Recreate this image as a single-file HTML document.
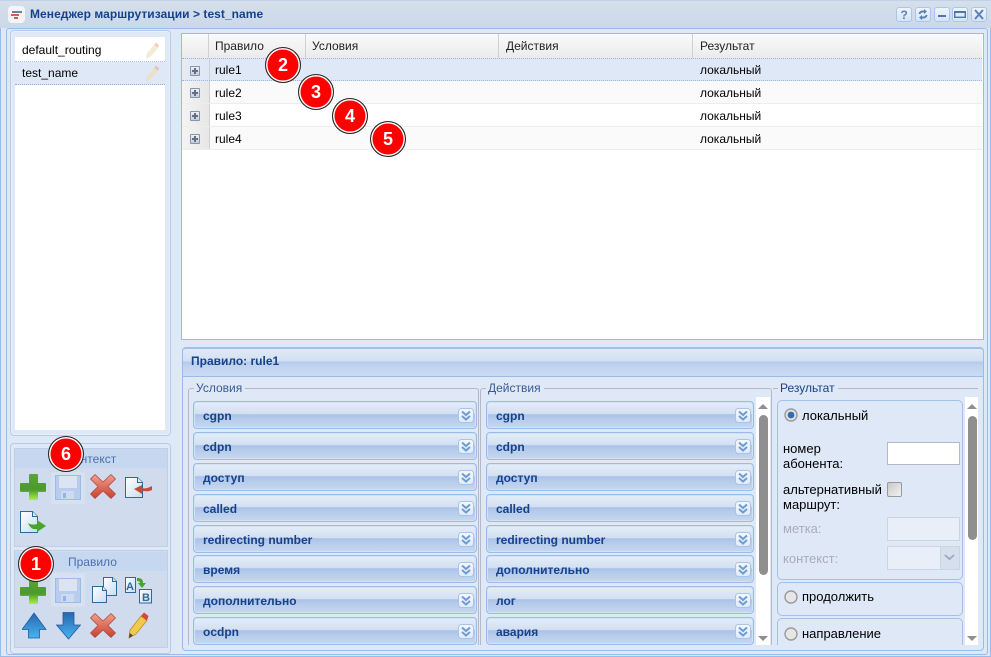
<!DOCTYPE html>
<html><head><meta charset="utf-8">
<style>
html,body{margin:0;padding:0}
body{width:991px;height:657px;overflow:hidden;position:relative;background:#dfe8f6;font-family:"Liberation Sans",sans-serif;font-size:12px;color:#000}
.a{position:absolute;box-sizing:border-box}
.t{position:absolute;white-space:nowrap;line-height:14px}
.b{font-weight:bold;color:#15428b}
.it{position:absolute;box-sizing:border-box;height:28px;border:1px solid #99bbe8;border-radius:4px;box-shadow:inset 0 0 0 1px #d5e2f3;background:linear-gradient(#e5eef9 0,#d3e0f2 45%,#a9c2e7 49%,#b4c9ea 60%,#c6d7ef 100%)}
.it span{position:absolute;left:9px;top:7px;font-weight:bold;color:#15428b;line-height:14px;white-space:nowrap}
.it svg{position:absolute;right:2px;top:6px}
.c{position:absolute;width:36px;height:36px;border-radius:50%;box-sizing:border-box;background:#f00;border:1px solid #222;box-shadow:inset 0 0 0 1.5px #fff;color:#fff;font:bold 18px/34px "Liberation Sans",sans-serif;text-align:center}
.row{position:absolute;left:182px;width:800px;height:23px;border-bottom:1px solid #ededed;box-sizing:border-box}
.ex{position:absolute;left:0;top:0;width:27px;height:22px;background:linear-gradient(90deg,#f4f4f4,#e7e7e7);border-right:1px solid #d0d0d0}
.ex i{position:absolute;left:8px;top:7px;width:10px;height:10px;box-sizing:border-box;border:1px solid #8793a8;border-radius:1px;background:linear-gradient(#eef1f5,#c6cedb)}
.ex i:before{content:"";position:absolute;left:1px;top:3px;width:6px;height:2px;background:#5f6f88}
.ex i:after{content:"";position:absolute;left:3px;top:1px;width:2px;height:6px;background:#5f6f88}
.hc{position:absolute;top:34px;height:24px;background:linear-gradient(#fafafa,#ebebeb);border-right:1px solid #d0d0d0;box-sizing:border-box}
.tb{position:absolute;top:7px;width:16px;height:15px;box-sizing:border-box;border:1px solid #a9c5ec;border-radius:3px;background:linear-gradient(#eef4fc,#d6e3f6)}
.tb svg{position:absolute;left:0;top:0}
</style></head><body>

<svg width="0" height="0" style="position:absolute">
<defs>
<linearGradient id="gr" x1="0" y1="0" x2="0" y2="1"><stop offset="0" stop-color="#5aa53a"/><stop offset=".6" stop-color="#4c9a2a"/><stop offset="1" stop-color="#a8ec5c"/></linearGradient>
<linearGradient id="rd" x1="0" y1="0" x2="0" y2="1"><stop offset="0" stop-color="#f0a090"/><stop offset="1" stop-color="#c8402f"/></linearGradient>
<linearGradient id="bl" x1="0" y1="0" x2="0" y2="1"><stop offset="0" stop-color="#2a66b0"/><stop offset="1" stop-color="#46b4f0"/></linearGradient>
<linearGradient id="pg" x1="0" y1="0" x2="1" y2="1"><stop offset="0" stop-color="#ffffff"/><stop offset="1" stop-color="#c7dcf3"/></linearGradient>
<linearGradient id="btn" x1="0" y1="0" x2="0" y2="1"><stop offset="0" stop-color="#f4f8fe"/><stop offset="1" stop-color="#dfeafa"/></linearGradient>
<g id="plus"><path d="M9 1a1 1 0 0 1 1-1h7a1 1 0 0 1 1 1v8h7a1 1 0 0 1 1 1v7a1 1 0 0 1-1 1h-7v7a1 1 0 0 1-1 1h-7a1 1 0 0 1-1-1v-7H1a1 1 0 0 1-1-1v-7a1 1 0 0 1 1-1h8z" fill="url(#gr)"/></g>
<g id="x"><path d="M5 .5L13 8l8-7.500 4.500 4.500-7.500 7.500 7.500 7.500-4.500 4.500-8-7.500-8 7.500L.5 20l7.500-7.500L.5 5z" fill="url(#rd)" stroke="#b04a3c" stroke-width=".8" stroke-linejoin="round"/></g>
<g id="save"><rect x=".5" y=".5" width="25" height="24" fill="#b8ccee" stroke="#9dbbe8"/><rect x="4" y="1" width="18" height="12" fill="#dce3f3"/><rect x="6" y="16" width="13" height="8" fill="#cfdaf0"/><rect x="8" y="18" width="3" height="5" fill="#94b4e4"/></g>
<g id="dbl"><path d="M4 3.500l4 3.500 4-3.500M4 8l4 3.500 4-3.500" fill="none" stroke="#6f9bd3" stroke-width="2"/></g>
<g id="bt"><rect x=".5" y=".5" width="15" height="14" rx="3" fill="url(#btn)" stroke="#a8c4ea"/><use href="#dbl"/></g>
</defs>
</svg>

<!-- title bar -->
<div class="a" style="left:0;top:0;width:991px;height:657px;border:1px solid #99bbe8;border-top:0;background:#dfe8f6"></div>
<div class="a" style="left:0;top:0;width:991px;height:28px;background:linear-gradient(#d5dfec,#cbd8e8);border-top:1px solid #c2d2e6"></div>
<div class="a" style="left:8px;top:6px;width:17px;height:17px;border-radius:4px;background:#f5f5f5"></div>
<svg class="a" style="left:11px;top:9px" width="12" height="12"><rect x="1" y="2" width="10" height="2" fill="#6a83ad"/><rect x="0" y="5" width="8" height="2" fill="#e25a4e"/><rect x="3" y="8" width="4" height="2" fill="#e25a4e"/></svg>
<div class="t" style="left:30px;top:7px;font-weight:bold;color:#15428b;font-size:12px;letter-spacing:.05px">Менеджер маршрутизации &gt; test_name</div>
<div class="tb" style="left:896px"><svg width="14" height="13"><text x="3.500" y="11" font-family="Liberation Sans" font-weight="bold" font-size="12" fill="#5b80b5">?</text></svg></div>
<div class="tb" style="left:915px"><svg width="14" height="13"><path d="M2.500 6a4 4 0 0 1 4-3.500h1.500V1l3 2.500-3 2.500V4.500H6.500A2 2 0 0 0 4.500 6zM11.500 7a4 4 0 0 1-4 3.500H6V12L3 9.500 6 7v1.500h1.500a2 2 0 0 0 2-1.500z" fill="#5b80b5"/></svg></div>
<div class="tb" style="left:934px"><svg width="14" height="13"><rect x="3" y="7" width="8" height="2" fill="#4f74ab"/></svg></div>
<div class="tb" style="left:952px"><svg width="14" height="13"><rect x="1.700" y="3.700" width="10.600" height="5.600" fill="none" stroke="#4f74ab" stroke-width="1.400"/><rect x="1" y="3" width="12" height="2" fill="#4f74ab"/></svg></div>
<div class="tb" style="left:971px"><svg width="14" height="13"><path d="M3 2l8 9M11 2l-8 9" stroke="#5b80b5" stroke-width="2"/></svg></div>

<!-- outer body border -->
<div class="a" style="left:6px;top:28px;width:982px;height:627px;border:1px solid #99bbe8;border-radius:3px"></div>

<!-- left list -->
<div class="a" style="left:10px;top:30px;width:161px;height:406px;border:1px solid #b5cbe9;border-radius:4px;box-shadow:inset 0 0 0 1px #e9f0fa"></div>
<div class="a" style="left:15px;top:37px;width:150px;height:393px;background:#fff"></div>
<div class="a" style="left:15px;top:37px;width:150px;height:25px;border-bottom:1px dotted #a9c0e4"></div>
<div class="a" style="left:15px;top:62px;width:150px;height:23px;background:#dfe8f6;border-bottom:1px dotted #8fafe0"></div>
<div class="t" style="left:22px;top:43px">default_routing</div>
<div class="t" style="left:22px;top:66px">test_name</div>
<svg class="a" style="left:145px;top:42px" width="14" height="18"><path d="M1 17l1-6 7-8 4 3-7 8z" fill="#f3ebd2"/><path d="M9 3l2-2.500 3 2.500-1 3z" fill="#f3cfc4"/></svg>
<svg class="a" style="left:145px;top:65px" width="14" height="18"><path d="M1 17l1-6 7-8 4 3-7 8z" fill="#e9e2c8"/><path d="M9 3l2-2.500 3 2.500-1 3z" fill="#e5c5ba"/></svg>

<!-- left bottom toolbar panels -->
<div class="a" style="left:10px;top:443px;width:161px;height:211px;border:1px solid #b5cbe9;border-radius:4px"></div>
<div class="a" style="left:14px;top:448px;width:154px;height:99px;background:#d0dcee;border:1px solid #bfcfe6"></div>
<div class="a" style="left:15px;top:449px;width:152px;height:19px;background:#c6d8ef"></div>
<div class="t" style="left:67px;top:452px;color:#4d6fae">Контекст</div>
<div class="a" style="left:14px;top:550px;width:154px;height:98px;background:#d0dcee;border:1px solid #bfcfe6"></div>
<div class="a" style="left:15px;top:552px;width:152px;height:19px;background:#c6d8ef"></div>
<div class="t" style="left:68px;top:555px;color:#4d6fae">Правило</div>

<svg class="a" style="left:20px;top:474px" width="27" height="27"><use href="#plus"/></svg>
<div class="a" style="left:51px;top:472px;width:34px;height:32px;border:1px solid #d7e0ee;background:#d6e1f1"></div>
<svg class="a" style="left:55px;top:475px" width="27" height="26"><use href="#save"/></svg>
<svg class="a" style="left:90px;top:474px" width="27" height="26"><use href="#x"/></svg>
<svg class="a" style="left:125px;top:477px" width="28" height="22"><path d="M.5.5h12l5 5v15H.5z" fill="url(#pg)" stroke="#2f6a96"/><path d="M12.500.5v5h5" fill="#dbe9f7" stroke="#2f6a96"/><path d="M27 9v4c-4 2-7 1-10 1v3l-8-5 8-4v3c3 1 6 0 10-2z" fill="#c94a3a"/></svg>
<svg class="a" style="left:20px;top:511px" width="27" height="23"><path d="M.5.5h12l5 5v16H.5z" fill="url(#pg)" stroke="#2f6a96"/><path d="M12.500.5v5h5" fill="#dbe9f7" stroke="#2f6a96"/><path d="M8 12c3 2 6 2 9 1v-4l9 6-9 6v-3c-4 1-7-1-9-6z" fill="#4aa32f"/></svg>

<svg class="a" style="left:20px;top:578px" width="27" height="27"><use href="#plus"/></svg>
<div class="a" style="left:51px;top:573px;width:34px;height:34px;border:1px solid #d7e0ee;background:#d6e1f1"></div>
<svg class="a" style="left:55px;top:578px" width="27" height="26"><use href="#save"/></svg>
<svg class="a" style="left:91px;top:576px" width="28" height="28">
<path d="M12.500 1.500h9l4 4v14h-13z" fill="url(#pg)" stroke="#2f6a96"/><path d="M21.500 1.500v4h4" fill="#dbe9f7" stroke="#2f6a96"/>
<path d="M1.500 10.500h10l4 4v12h-14z" fill="url(#pg)" stroke="#2f6a96"/><path d="M11.500 10.500v4h4" fill="#dbe9f7" stroke="#2f6a96"/></svg>
<svg class="a" style="left:125px;top:577px" width="28" height="27"><rect x=".5" y=".5" width="10" height="15" fill="url(#pg)" stroke="#2f6a96"/><text x="1" y="13" font-family="Liberation Sans" font-weight="bold" font-size="11" fill="#2f6a96">A</text><rect x="14.500" y="12.500" width="12" height="13.500" fill="url(#pg)" stroke="#2f6a96"/><text x="17" y="24" font-family="Liberation Sans" font-weight="bold" font-size="11" fill="#2f6a96">B</text><path d="M12 1c4 0 6 1 6 5h3l-4 5-4-5h2c0-1-1-2-3-2z" fill="#4aa32f"/></svg>
<svg class="a" style="left:22px;top:612px" width="25" height="27"><path d="M12 1l12 16.500h-6.500V26h-11v-8.500H0z" fill="url(#bl)" stroke="#1e5a9e" stroke-width=".8"/></svg>
<svg class="a" style="left:56px;top:612px" width="25" height="28"><path d="M7 .5h11v12.500h6.500L12.500 27 .5 13H7z" fill="url(#bl)" stroke="#1e5a9e" stroke-width=".8"/></svg>
<svg class="a" style="left:90px;top:613px" width="27" height="26"><use href="#x"/></svg>
<svg class="a" style="left:128px;top:612px" width="21" height="27"><path d="M1 26l1-8L13 4l6 4.500L8 22z" fill="#f2c94c" stroke="#b98a2a" stroke-width=".8"/><path d="M13 4l3-3.500 4.500 3.500-1.500 4.500z" fill="#d4483b"/><path d="M1 26l.7-5 3.300 2.500z" fill="#444"/></svg>

<!-- grid -->
<div class="a" style="left:181px;top:33px;width:803px;height:307px;border:1px solid #99bbe8;background:#fff"></div>
<div class="hc" style="left:182px;width:27px"></div>
<div class="hc" style="left:209px;width:97px"></div>
<div class="hc" style="left:306px;width:193px"></div>
<div class="hc" style="left:499px;width:194px"></div>
<div class="hc" style="left:693px;width:289px;border-right:0"></div>
<div class="t" style="left:215px;top:39px;color:#222">Правило</div>
<div class="t" style="left:312px;top:39px;color:#222">Условия</div>
<div class="t" style="left:506px;top:39px;color:#222">Действия</div>
<div class="t" style="left:700px;top:39px;color:#222">Результат</div>

<div class="row" style="top:58px;background:#dfe8f6;border-top:1px dotted #9ab5e0;border-bottom:1px dotted #9ab5e0"><div class="ex" style="height:21px;background:linear-gradient(90deg,#e6ebf4,#dfe8f6)"><i></i></div></div>
<div class="row" style="top:81px;background:#fafafa"><div class="ex"><i></i></div></div>
<div class="row" style="top:104px"><div class="ex"><i></i></div></div>
<div class="row" style="top:127px;background:#fafafa"><div class="ex"><i></i></div></div>
<div class="t" style="left:215px;top:63px">rule1</div><div class="t" style="left:700px;top:63px">локальный</div>
<div class="t" style="left:215px;top:86px">rule2</div><div class="t" style="left:700px;top:86px">локальный</div>
<div class="t" style="left:215px;top:109px">rule3</div><div class="t" style="left:700px;top:109px">локальный</div>
<div class="t" style="left:215px;top:132px">rule4</div><div class="t" style="left:700px;top:132px">локальный</div>

<!-- detail -->
<div class="a" style="left:182px;top:347px;width:802px;height:304px;border:1px solid #99bbe8;border-top:2px solid #a3c0e8;border-radius:4px 4px 4px 4px"></div>
<div class="a" style="left:183px;top:349px;width:800px;height:28px;border-bottom:1px solid #99bbe8;background:linear-gradient(#e0eaf7 0,#d3e0f2 44%,#b5cbea 48%,#bfd2ee 60%,#cbdbf2 100%);border-radius:3px 3px 0 0"></div>
<div class="t b" style="left:191px;top:354px">Правило: rule1</div>

<!-- fieldsets -->
<div class="a" style="left:188px;top:388px;width:291px;height:257px;border:1px solid #b5b8c8;border-bottom:0;border-radius:3px 3px 0 0"></div>
<div class="t" style="left:194px;top:381px;padding:0 3px 0 2px;background:#dfe8f6;color:#3b5a94">Условия</div>
<div class="a" style="left:480px;top:388px;width:292px;height:257px;border:1px solid #b5b8c8;border-bottom:0;border-radius:3px 3px 0 0"></div>
<div class="t" style="left:486px;top:381px;padding:0 3px 0 2px;background:#dfe8f6;color:#3b5a94">Действия</div>
<div class="a" style="left:773px;top:388px;width:205px;height:1px;background:#b5b8c8"></div>
<div class="t" style="left:778px;top:381px;padding:0 3px 0 2px;background:#dfe8f6;color:#15428b">Результат</div>

<!-- conditions -->
<div class="it" style="left:193px;top:401px;width:284px"><span>cgpn</span><svg width="16" height="15"><use href="#bt"/></svg></div>
<div class="it" style="left:193px;top:432px;width:284px"><span>cdpn</span><svg width="16" height="15"><use href="#bt"/></svg></div>
<div class="it" style="left:193px;top:463px;width:284px"><span>доступ</span><svg width="16" height="15"><use href="#bt"/></svg></div>
<div class="it" style="left:193px;top:494px;width:284px"><span>called</span><svg width="16" height="15"><use href="#bt"/></svg></div>
<div class="it" style="left:193px;top:525px;width:284px"><span>redirecting number</span><svg width="16" height="15"><use href="#bt"/></svg></div>
<div class="it" style="left:193px;top:555px;width:284px"><span>время</span><svg width="16" height="15"><use href="#bt"/></svg></div>
<div class="it" style="left:193px;top:586px;width:284px"><span>дополнительно</span><svg width="16" height="15"><use href="#bt"/></svg></div>
<div class="it" style="left:193px;top:617px;width:284px"><span>ocdpn</span><svg width="16" height="15"><use href="#bt"/></svg></div>

<!-- actions -->
<div class="it" style="left:486px;top:401px;width:268px"><span>cgpn</span><svg width="16" height="15"><use href="#bt"/></svg></div>
<div class="it" style="left:486px;top:432px;width:268px"><span>cdpn</span><svg width="16" height="15"><use href="#bt"/></svg></div>
<div class="it" style="left:486px;top:463px;width:268px"><span>доступ</span><svg width="16" height="15"><use href="#bt"/></svg></div>
<div class="it" style="left:486px;top:494px;width:268px"><span>called</span><svg width="16" height="15"><use href="#bt"/></svg></div>
<div class="it" style="left:486px;top:525px;width:268px"><span>redirecting number</span><svg width="16" height="15"><use href="#bt"/></svg></div>
<div class="it" style="left:486px;top:555px;width:268px"><span>дополнительно</span><svg width="16" height="15"><use href="#bt"/></svg></div>
<div class="it" style="left:486px;top:586px;width:268px"><span>лог</span><svg width="16" height="15"><use href="#bt"/></svg></div>
<div class="it" style="left:486px;top:617px;width:268px"><span>авария</span><svg width="16" height="15"><use href="#bt"/></svg></div>

<!-- action scrollbar -->
<div class="a" style="left:756px;top:397px;width:14px;height:248px;background:#fff"></div>
<svg class="a" style="left:758px;top:404px" width="10" height="5"><path d="M0 5L5 0l5 5z" fill="#8f8f8f"/></svg>
<div class="a" style="left:759px;top:415px;width:9px;height:160px;background:#8f8f8f;border-radius:5px"></div>
<svg class="a" style="left:758px;top:636px" width="10" height="5"><path d="M0 0h10L5 5z" fill="#8f8f8f"/></svg>

<!-- result -->
<div class="a" style="left:777px;top:400px;width:186px;height:180px;border:1px solid #a3c0e8;border-radius:5px"></div>
<div class="a" style="left:777px;top:582px;width:186px;height:34px;border:1px solid #a3c0e8;border-radius:5px"></div>
<div class="a" style="left:777px;top:618px;width:186px;height:27px;border:1px solid #a3c0e8;border-bottom:0;border-radius:5px 5px 0 0"></div>

<svg class="a" style="left:784px;top:408px" width="14" height="14"><circle cx="7" cy="7" r="6" fill="#e2e2e2" stroke="#9a9a9a" stroke-width="1.400"/><circle cx="7" cy="7" r="3.400" fill="#2f6fb0"/></svg>
<div class="t" style="left:802px;top:409px;font-size:13px">локальный</div>
<div class="t" style="left:783px;top:441px;font-size:13px;line-height:15px">номер<br>абонента:</div>
<div class="a" style="left:887px;top:442px;width:73px;height:23px;background:#fff;border:1px solid #b5b8c8"></div>
<div class="t" style="left:783px;top:482px;font-size:13px;line-height:15px">альтернативный<br>маршрут:</div>
<div class="a" style="left:887px;top:482px;width:15px;height:15px;border:1px solid #999;border-radius:2px;background:linear-gradient(135deg,#c9c9c9,#f2f2f2)"></div>
<div class="t" style="left:783px;top:522px;color:#a9adb8;font-size:13px">метка:</div>
<div class="a" style="left:887px;top:517px;width:73px;height:24px;background:#e9eff9;border:1px solid #ccd4e0"></div>
<div class="t" style="left:783px;top:552px;color:#a9adb8;font-size:13px">контекст:</div>
<div class="a" style="left:887px;top:546px;width:73px;height:24px;background:#e9eff9;border:1px solid #ccd4e0"></div>
<div class="a" style="left:940px;top:547px;width:19px;height:22px;background:#d6dfec;border-left:1px solid #ccd4e0"></div>
<svg class="a" style="left:944px;top:554px" width="11" height="7"><path d="M1 1l4.500 4L10 1" fill="none" stroke="#98a9c2" stroke-width="1.800"/></svg>

<svg class="a" style="left:784px;top:590px" width="14" height="14"><circle cx="7" cy="7" r="6" fill="#e6e6e6" stroke="#9a9a9a" stroke-width="1.400"/></svg>
<div class="t" style="left:802px;top:590px;font-size:13px">продолжить</div>
<svg class="a" style="left:784px;top:627px" width="14" height="14"><circle cx="7" cy="7" r="6" fill="#e6e6e6" stroke="#9a9a9a" stroke-width="1.400"/></svg>
<div class="t" style="left:802px;top:627px;font-size:13px">направление</div>

<!-- result scrollbar -->
<div class="a" style="left:965px;top:397px;width:13px;height:248px;background:#fff"></div>
<svg class="a" style="left:967px;top:404px" width="10" height="5"><path d="M0 5L5 0l5 5z" fill="#8f8f8f"/></svg>
<div class="a" style="left:968px;top:416px;width:9px;height:124px;background:#8f8f8f;border-radius:5px"></div>
<svg class="a" style="left:967px;top:636px" width="10" height="5"><path d="M0 0h10L5 5z" fill="#8f8f8f"/></svg>

<!-- number badges -->
<div class="c" style="left:265px;top:47px">2</div>
<div class="c" style="left:298px;top:74px">3</div>
<div class="c" style="left:332px;top:98px">4</div>
<div class="c" style="left:370px;top:121px">5</div>
<div class="c" style="left:48px;top:436px">6</div>
<div class="c" style="left:18px;top:546px">1</div>

</body></html>
